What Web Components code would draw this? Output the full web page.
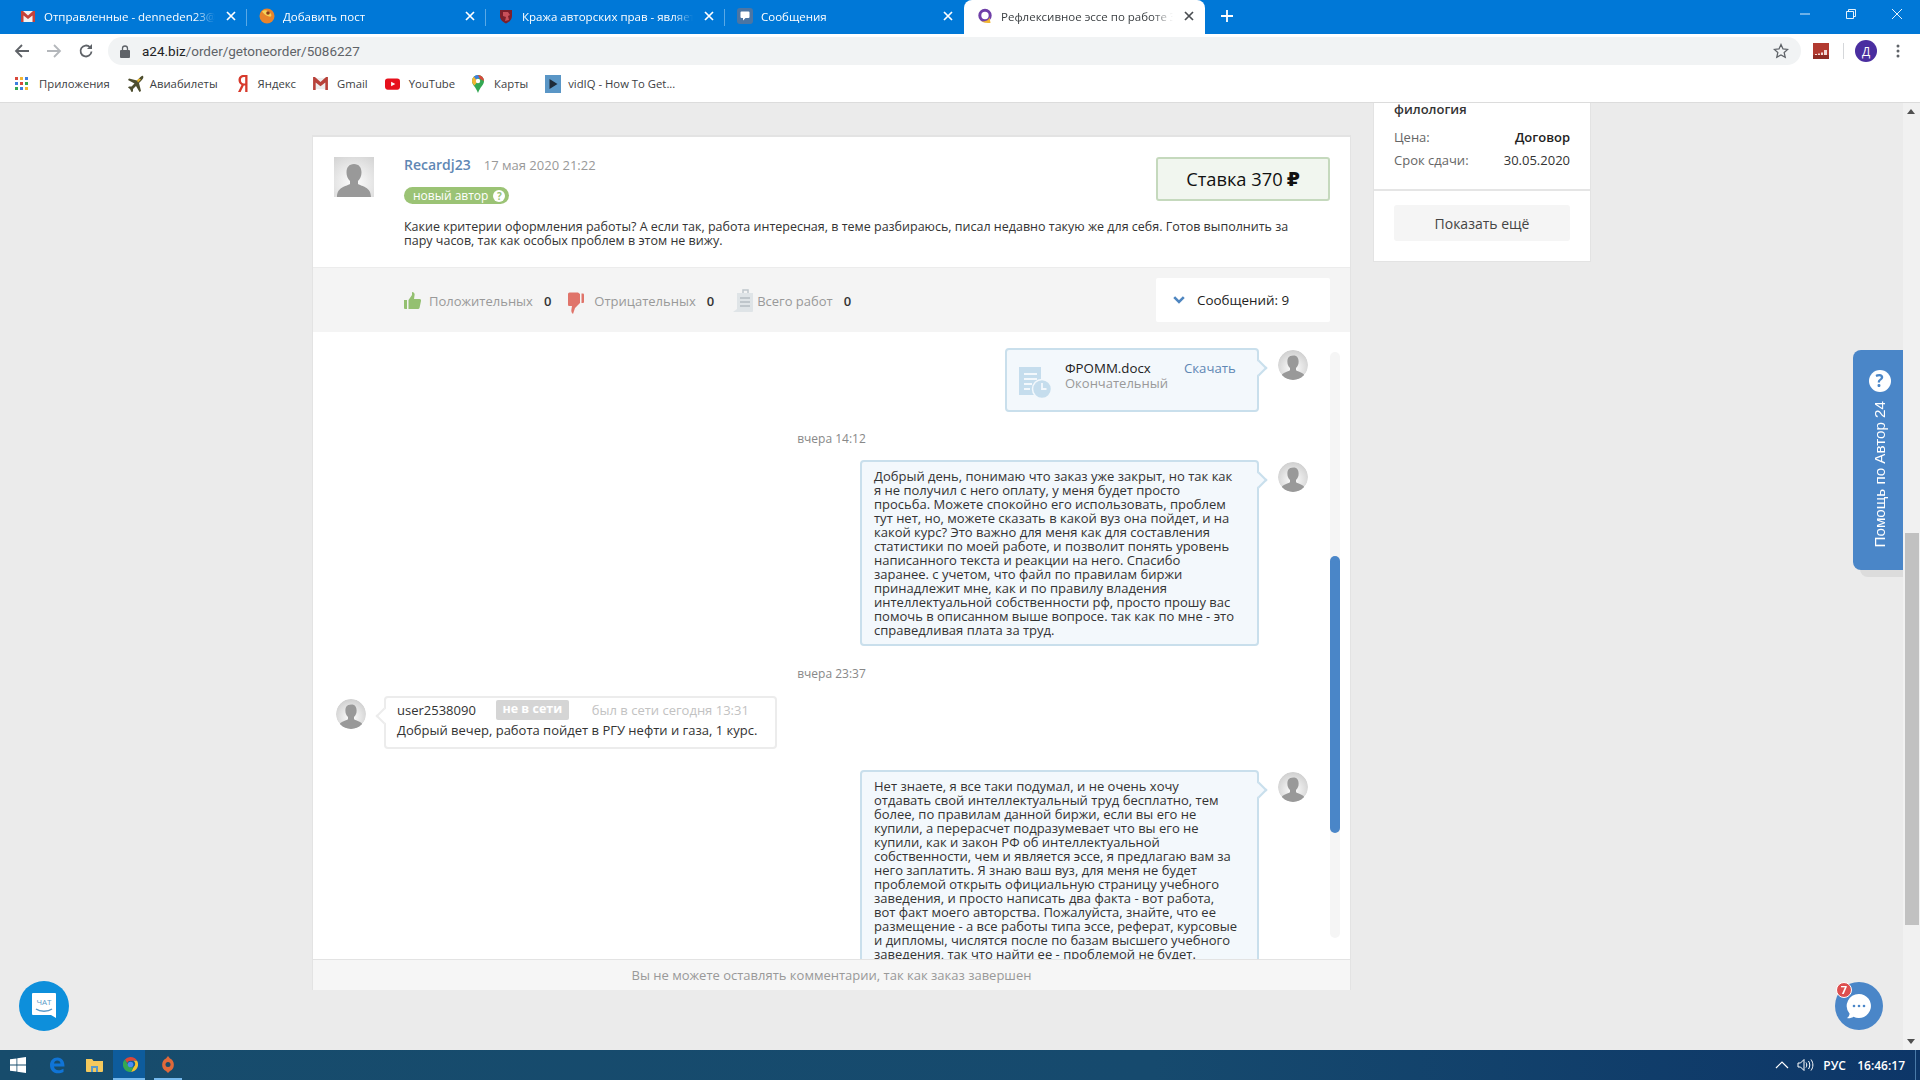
<!DOCTYPE html>
<html lang="ru">
<head>
<meta charset="utf-8">
<title>Рефлексивное эссе</title>
<style>
    html, body { margin: 0; height: 100%; }
    body {
        width: 1920px;
        height: 1080px;
        overflow: hidden;
        display: flex;
        flex-direction: column;
        font-family: "Open Sans", "Liberation Sans", sans-serif;
        background: #ebebeb;
    }
</style>
</head>
<body>

<tab-strip>
    <browser-tab close="light"><svg slot="icon" width="16" height="16" viewBox="0 0 16 16"><rect x="1" y="3" width="14" height="11" fill="#f2f2f2"/><path d="M1 14V3h2l5 4.500L13 3h2v11h-2.500V7.500L8 11 3.500 7.500V14z" fill="#c5423a"/></svg>Отправленные - denneden23@gmail.com</browser-tab>
    <browser-tab close="light"><svg slot="icon" width="16" height="16" viewBox="0 0 16 16"><circle cx="8" cy="8" r="7.500" fill="#e8842c"/><path d="M3 3.500C6 1 10 3 12 6c1 2 0 3-2 2.500C7 8 5 6 3 3.500z" fill="#f6d25a"/><circle cx="9" cy="5" r="1.800" fill="#8a3a1a"/></svg>Добавить пост</browser-tab>
    <browser-tab close="light"><svg slot="icon" width="16" height="16" viewBox="0 0 16 16"><path d="M2 2h12v6c0 4-3 6-6 7.500C5 14 2 12 2 8z" fill="#7d1f2a"/><path d="M5 4h5l2 3-2 1 1 4-4 1 1-4-3-1z" fill="#c9505a"/></svg>Кража авторских прав - является преступлением</browser-tab>
    <browser-tab close="light"><svg slot="icon" width="16" height="16" viewBox="0 0 16 16"><rect width="16" height="16" rx="3" fill="#4c75a3"/><path d="M4.500 3.500h7a1 1 0 0 1 1 1V9a1 1 0 0 1-1 1H8.500L6 12.500V10H4.500a1 1 0 0 1-1-1V4.500a1 1 0 0 1 1-1z" fill="#fff"/></svg>Сообщения</browser-tab>
    <browser-tab active close="dark"><svg slot="icon" width="16" height="16" viewBox="0 0 16 16"><circle cx="8" cy="7.500" r="5.200" fill="none" stroke="#6f3fa8" stroke-width="3"/><path d="M4 13.500c3 1.500 6 1.500 9.500 1.500l-1-6c-.5 3-3 4.500-8.500 4.500z" fill="#f2b632"/></svg>Рефлексивное эссе по работе Эрика Фромма</browser-tab>
    <tab-new></tab-new>
    <window-buttons></window-buttons>
</tab-strip>

<browser-toolbar></browser-toolbar>
<bookmarks-bar>
    <book-mark gap="10"><svg slot="icon" width="14" height="14" viewBox="0 0 14 14"><g><rect width="3" height="3" fill="#d9483b"/><rect x="5" width="3" height="3" fill="#f2b632"/><rect x="10" width="3" height="3" fill="#3c7ee0"/><rect y="5" width="3" height="3" fill="#3c7ee0"/><rect x="5" y="5" width="3" height="3" fill="#d9483b"/><rect x="10" y="5" width="3" height="3" fill="#34a853"/><rect y="10" width="3" height="3" fill="#34a853"/><rect x="5" y="10" width="3" height="3" fill="#3c7ee0"/><rect x="10" y="10" width="3" height="3" fill="#f2b632"/></g></svg>Приложения</book-mark>
    <book-mark gap="5"><svg slot="icon" width="18" height="18" viewBox="0 0 18 18"><path d="M16 1c1 1 0 3-2 5l-2 2 2 8-1.500 1L9 11l-3 3v2.500L4.500 17 3 14 1 12.500 2 11.500h2.500l3-3L1 5l1-1.500 8 2 2-2c2-2 3-3 4-2.500z" fill="#4d4d2e"/><path d="M10 5.500l2-2 2 1-3 3z" fill="#e8b62c"/></svg>Авиабилеты</book-mark>
    <book-mark gap="10" style="margin-left:2px"><svg slot="icon" width="11" height="19" viewBox="0 0 11 19"><path d="M10.500 1H7C3.500 1 1.500 3 1.500 6c0 2.400 1.100 3.800 3 4.900L1 18h2.600l3.200-6.600h1.400V18h2.300zM8.200 9.400H7c-2 0-3.100-1.300-3.100-3.400S5 3 7 3h1.200z" fill="#d7392b"/></svg>Яндекс</book-mark>
    <book-mark gap="9"><svg slot="icon" width="15" height="13" viewBox="0 0 16 14"><rect x="1" y="1" width="14" height="12" fill="#ededed"/><path d="M0 14V0h2l6 5.500L14 0h2v14h-2.800V5.800L8 10 2.800 5.800V14z" fill="#b8423a"/></svg>Gmail</book-mark>
    <book-mark gap="9"><svg slot="icon" width="15" height="12" viewBox="0 0 16 12"><rect width="16" height="12" rx="3" fill="#e6101c"/><path d="M6.500 3.500L11 6 6.500 8.500z" fill="#fff"/></svg>YouTube</book-mark>
    <book-mark gap="10"><svg slot="icon" width="12" height="18" viewBox="0 0 12 18"><path d="M6 0a6 6 0 0 1 6 6c0 4-4 6-6 12C4 12 0 10 0 6a6 6 0 0 1 6-6z" fill="#34a853"/><path d="M0 6a6 6 0 0 1 2-4.500L6 6 2.500 10.500C1 9 0 8 0 6z" fill="#f2b632"/><path d="M2 1.500A6 6 0 0 1 6 0l2 2.500-4 2z" fill="#3c7ee0"/><path d="M6 0a6 6 0 0 1 6 6L8 4z" fill="#d9483b"/><circle cx="6" cy="6" r="2.200" fill="#fff"/></svg>Карты</book-mark>
    <book-mark gap="7"><svg slot="icon" width="16" height="18" viewBox="0 0 16 18"><rect width="16" height="18" fill="#5a96c6"/><path d="M4.500 4l8 5-8 5z" fill="#1e2a38"/></svg>vidIQ - How To Get...</book-mark>
</bookmarks-bar>

<page-main>
    <order-card>
        <card-head></card-head>
        <card-stats></card-stats>
        <chat-list>
            <chat-row side="me" style="--top:16px">
                <file-bubble></file-bubble>
            </chat-row>
            <chat-date style="--above:20px;--below:14px">вчера 14:12</chat-date>
            <chat-row side="me">
                <chat-bubble side="me">Добрый день, понимаю что заказ уже закрыт, но так как<br>я не получил с него оплату, у меня будет просто<br>просьба. Можете спокойно его использовать, проблем<br>тут нет, но, можете сказать в какой вуз она пойдет, и на<br>какой курс? Это важно для меня как для составления<br>статистики по моей работе, и позволит понять уровень<br>написанного текста и реакции на него. Спасибо<br>заранее. с учетом, что файл по правилам биржи<br>принадлежит мне, как и по правилу владения<br>интеллектуальной собственности рф, просто прошу вас<br>помочь в описанном выше вопросе. так как по мне - это<br>справедливая плата за труд.</chat-bubble>
            </chat-row>
            <chat-date style="--above:21px;--below:15px">вчера 23:37</chat-date>
            <chat-row side="other">
                <incoming-bubble></incoming-bubble>
            </chat-row>
            <chat-row side="me" style="--top:21px">
                <chat-bubble side="me">Нет знаете, я все таки подумал, и не очень хочу<br>отдавать свой интеллектуальный труд бесплатно, тем<br>более, по правилам данной биржи, если вы его не<br>купили, а перерасчет подразумевает что вы его не<br>купили, как и закон РФ об интеллектуальной<br>собственности, чем и является эссе, я предлагаю вам за<br>него заплатить. Я знаю ваш вуз, для меня не будет<br>проблемой открыть официальную страницу учебного<br>заведения, и просто написать два факта - вот работа,<br>вот факт моего авторства. Пожалуйста, знайте, что ее<br>размещение - а все работы типа эссе, реферат, курсовые<br>и дипломы, числятся после по базам высшего учебного<br>заведения, так что найти ее - проблемой не будет.</chat-bubble>
            </chat-row>
        </chat-list>
        <card-foot>Вы не можете оставлять комментарии, так как заказ завершен</card-foot>
    </order-card>
    <order-side></order-side>
    <page-scrollbar></page-scrollbar>
</page-main>

<win-taskbar></win-taskbar>
<help-tab>Помощь по Автор 24</help-tab>
<chat-left></chat-left>
<chat-right></chat-right>

<script>
// silhouette used by all the grey avatars
const PERSON = `<path d="M20 7c-5 0-7.500 3.500-7.500 8.500 0 3.500 1.300 6.500 3.500 8.500v3C12 29.500 3 30 3 40h34c0-10-9-10.500-13-13v-3c2.200-2 3.500-5 3.500-8.500C27.500 10.500 25 7 20 7z" fill="#999"/>`;

class BaseEl extends HTMLElement {
    constructor() {
        super();
        this.attachShadow({ mode: "open" });
    }
    getStyles() { return ""; }
    getMarkup() { return "<slot></slot>"; }
    connectedCallback() {
        const template = document.createElement("template");
        template.innerHTML = `<style>${this.getStyles()}</style>${this.getMarkup()}`;
        this.shadowRoot.appendChild(template.content.cloneNode(true));
    }
}

class TabStrip extends BaseEl {
    getStyles() {
        return `:host { display: flex; flex: none; height: 34px; background: #0078d7; padding-left: 8px; box-sizing: border-box; position: relative; }`;
    }
}

class BrowserTab extends BaseEl {
    getStyles() {
        return `
            :host { display: flex; flex: none; align-items: center; width: 239px; height: 34px; box-sizing: border-box; padding: 0 0 2px 12px; color: #fff; font: 11.500px "Open Sans", sans-serif; position: relative; }
            :host(:not(:nth-of-type(4)):not([active]))::after { content: ""; position: absolute; right: 0; top: 9px; height: 17px; width: 1px; background: #5aa9e6; }
            :host([active]) { background: #fff; color: #3c4043; border-radius: 8px 8px 0 0; width: 241px; padding-left: 13px; }
            .icon { flex: none; width: 16px; height: 16px; margin-right: 8px; display: flex; align-items: center; }
            .title { flex: 1; white-space: nowrap; overflow: hidden; -webkit-mask-image: linear-gradient(to right, #000 88%, transparent); mask-image: linear-gradient(to right, #000 88%, transparent); }
            .x { flex: none; width: 32px; display: flex; justify-content: center; }
        `;
    }
    getMarkup() {
        const color = this.getAttribute("close") === "dark" ? "#4a4d51" : "#fff";
        return `<span class="icon"><slot name="icon"></slot></span><span class="title"><slot></slot></span>
            <span class="x"><svg width="10" height="10" viewBox="0 0 10 10"><path d="M1 1l8 8M9 1l-8 8" stroke="${color}" stroke-width="1.700"/></svg></span>`;
    }
}

class TabNew extends BaseEl {
    getStyles() { return `:host { display: flex; align-items: center; margin-left: 15px; padding-bottom: 2px; }`; }
    getMarkup() { return `<svg width="14" height="14" viewBox="0 0 14 14"><path d="M7 1v12M1 7h12" stroke="#fff" stroke-width="1.800"/></svg>`; }
}

class WindowButtons extends BaseEl {
    getStyles() {
        return `:host { display: flex; align-items: center; gap: 34px; margin-left: auto; padding: 0 17px 6px 0; }
                svg { display: block; }`;
    }
    getMarkup() {
        return `<svg width="12" height="12" viewBox="0 0 12 12"><path d="M1 6h10" stroke="#fff" stroke-opacity=".85"/></svg>
            <svg width="12" height="12" viewBox="0 0 12 12"><path d="M1.500 3.500h7v7h-7zM3.500 3.500v-2h7v7h-2" fill="none" stroke="#fff" stroke-opacity=".9"/></svg>
            <svg width="12" height="12" viewBox="0 0 12 12"><path d="M1 1l10 10M11 1L1 11" stroke="#fff" stroke-opacity=".9"/></svg>`;
    }
}

class BrowserToolbar extends BaseEl {
    getStyles() {
        return `
            :host { display: flex; flex: none; align-items: center; height: 36px; background: #fff; box-sizing: border-box; padding: 3px 0 5px 14px; }
            .nav { display: flex; gap: 16px; }
            svg { display: block; }
            .omni { flex: none; width: 1693px; height: 28px; margin-left: 14px; border-radius: 14px; background: #f1f3f4; display: flex; align-items: center; box-sizing: border-box; padding: 0 12px 0 12px; font: 13.500px Roboto, sans-serif; color: #5f6368; }
            .omni b { font-weight: 400; color: #202124; }
            .url { margin-left: 12px; flex: 1; }
            .ext { margin-left: 12px; }
            .sep { width: 1px; height: 16px; background: #d5d7da; margin: 0 11px 0 14px; }
            .me { width: 22px; height: 22px; border-radius: 50%; background: #4a2ea0; color: #fff; font: 12px "Open Sans", sans-serif; display: flex; align-items: center; justify-content: center; }
            .dots { margin-left: 19px; }
        `;
    }
    getMarkup() {
        return `<div class="nav">
                <svg width="16" height="16" viewBox="0 0 16 16"><path d="M15 8H2M8 2L2 8l6 6" fill="none" stroke="#5f6368" stroke-width="1.800"/></svg>
                <svg width="16" height="16" viewBox="0 0 16 16"><path d="M1 8h13M8 2l6 6-6 6" fill="none" stroke="#b4b7bb" stroke-width="1.800"/></svg>
                <svg width="16" height="16" viewBox="0 0 16 16"><path d="M13.500 8.500a5.500 5.500 0 1 1-1.600-4.400" fill="none" stroke="#5f6368" stroke-width="1.800"/><path d="M14 1v5H9z" fill="#5f6368"/></svg>
            </div>
            <div class="omni">
                <svg width="10" height="13" viewBox="0 0 10 13"><path d="M2.500 5V3.500a2.500 2.500 0 0 1 5 0V5" fill="none" stroke="#5f6368" stroke-width="1.300"/><rect y="5" width="10" height="8" rx="1" fill="#5f6368"/></svg>
                <span class="url"><b>a24.biz</b>/order/getoneorder/5086227</span>
                <svg width="16" height="16" viewBox="0 0 16 16"><path d="M8 1.500l2 4.400 4.700.5-3.500 3.200 1 4.700L8 11.900l-4.200 2.400 1-4.700L1.300 6.400 6 5.900z" fill="none" stroke="#5f6368" stroke-width="1.300"/></svg>
            </div>
            <svg class="ext" width="16" height="16" viewBox="0 0 16 16"><rect width="16" height="16" fill="#b23a30"/><path d="M2 11h2v1H2zM5 10.500h2V12H5zM8 9.500h2V12H8zM11 7h3v5h-3z" fill="#f3d9d5"/><rect y="12" width="16" height="4" fill="#8e2c24"/></svg>
            <div class="sep"></div>
            <div class="me">Д</div>
            <svg class="dots" width="4" height="14" viewBox="0 0 4 14"><circle cx="2" cy="2" r="1.500" fill="#5f6368"/><circle cx="2" cy="7" r="1.500" fill="#5f6368"/><circle cx="2" cy="12" r="1.500" fill="#5f6368"/></svg>`;
    }
}

class BookmarksBar extends BaseEl {
    getStyles() {
        return `:host { display: flex; flex: none; align-items: center; height: 33px; box-sizing: border-box; background: #fff; border-bottom: 1px solid #dcdcdc; padding: 0 0 5px 15px; gap: 17px; }`;
    }
}

class BookMark extends BaseEl {
    getStyles() {
        return `:host { display: flex; align-items: center; font: 11.300px "Open Sans", sans-serif; color: #3c4043; white-space: nowrap; }
                .icon { display: flex; align-items: center; margin-right: ${this.getAttribute("gap") || 9}px; }`;
    }
    getMarkup() { return `<span class="icon"><slot name="icon"></slot></span><slot></slot>`; }
}

class PageMain extends BaseEl {
    getStyles() {
        return `:host { display: flex; flex: 1; min-height: 0; align-items: flex-start; padding-left: 313px; position: relative; overflow: hidden; }`;
    }
}

class OrderCard extends BaseEl {
    getStyles() {
        return `:host { display: flex; flex-direction: column; flex: none; width: 1037px; height: 853px; margin-top: 34px; background: #fff; box-shadow: 0 -1px 0 1px #e3e3e3; }`;
    }
}

class CardHead extends BaseEl {
    getStyles() {
        return `
            :host { display: block; flex: none; height: 130px; box-sizing: border-box; padding: 19px 20px 0 21px; position: relative; font-size: 13px; }
            .ava { float: left; width: 40px; height: 40px; margin-top: 1px; }
            .body { margin-left: 70px; }
            .top { display: flex; justify-content: space-between; align-items: flex-start; }
            .who { display: flex; align-items: baseline; gap: 13px; line-height: 16px; margin-top: 1px; }
            .name { font-size: 14px; font-weight: 600; color: #5f87b4; }
            .date { color: #999; }
            .badge { display: inline-flex; align-items: center; gap: 5px; height: 17px; margin-top: 14px; padding: 0 4px 0 9px; border-radius: 9px; background: #9bc375; color: #fff; font-size: 12px; line-height: 17px; }
            .q { width: 12px; height: 12px; border-radius: 50%; background: #fff; color: #9bc375; font: 700 10px/12px "Open Sans", sans-serif; text-align: center; }
            .bid { width: 174px; height: 44px; margin-top: 1px; box-sizing: border-box; border: 2px solid #c5d9bd; border-radius: 3px; background: #f1f6ef; color: #111; font-size: 18.300px; display: flex; align-items: center; justify-content: center; padding-bottom: 1px; }
            .bid b { font-family: "DejaVu Sans", sans-serif; font-weight: 700; font-size: 19px; margin-left: 4px; }
            p { margin: 16px 0 0; font-size: 12.500px; line-height: 14px; color: #333; width: 905px; }
        `;
    }
    getMarkup() {
        return `<svg class="ava" viewBox="0 0 40 40"><defs><radialGradient id="g" cx=".5" cy=".65" r=".8"><stop offset="0" stop-color="#fff"/><stop offset="1" stop-color="#d4d4d4"/></radialGradient></defs><rect width="40" height="40" fill="url(#g)"/>${PERSON}</svg>
            <div class="body">
                <div class="top">
                    <div>
                        <div class="who"><span class="name">Recardj23</span><span class="date">17 мая 2020 21:22</span></div>
                        <span class="badge">новый автор <span class="q">?</span></span>
                    </div>
                    <div class="bid">Ставка 370<b>₽</b></div>
                </div>
                <p>Какие критерии оформления работы? А если так, работа интересная, в теме разбираюсь, писал недавно такую же для себя. Готов выполнить за пару часов, так как особых проблем в этом не вижу.</p>
            </div>`;
    }
}

class CardStats extends BaseEl {
    getStyles() {
        return `
            :host { display: flex; flex: none; align-items: center; height: 65px; box-sizing: border-box; background: #f4f4f4; border-top: 1px solid #ececec; padding: 1px 20px 0 91px; font-size: 13px; color: #999; }
            .s { display: flex; align-items: center; }
            .s b { font-weight: 600; color: #333; margin: 0 17px 0 11px; }
            svg { display: block; margin-right: 8px; }
            .count { margin-left: auto; margin-top: -1px; width: 174px; height: 44px; box-sizing: border-box; background: #fff; border-radius: 2px; display: flex; align-items: center; padding-left: 17px; color: #222; font-size: 13.400px; }
            .count svg { margin-right: 12px; }
        `;
    }
    getMarkup() {
        return `<div class="s"><svg width="17" height="18" viewBox="0 0 17 18"><path d="M0 8h3v9H1a1 1 0 0 1-1-1zM4.500 8L8 3V0c2 0 3 1.500 2.500 3.500L10 7h5.500a1.500 1.500 0 0 1 1.500 2l-1.500 7a1.500 1.500 0 0 1-1.500 1H4.500z" fill="#94c071"/></svg>Положительных<b>0</b></div>
            <div class="s"><svg width="16" height="22" viewBox="0 0 16 22" style="margin-right:10px;margin-top:5px"><path d="M0 2a1.500 1.500 0 0 1 1.500-1.500H10L12 2v9L7 16l-2 6c-1.500-1-2-3-1.500-5l.5-3H1.500A1.500 1.500 0 0 1 0 12z" fill="#e0746a"/><path d="M13.500 1.500H15a1 1 0 0 1 1 1V10a1 1 0 0 1-1 1h-1.500z" fill="#e0746a"/></svg>Отрицательных<b style="margin-right:19px">0</b></div>
            <div class="s"><svg width="20" height="24" viewBox="0 0 20 24" style="margin-right:4px"><path d="M4 4h16v18a1 1 0 0 1-1 1H0l4-3z" fill="#dfe4e7"/><path d="M7 9h10M7 13h10M7 17h10" stroke="#bfc6cb" stroke-width="2"/><path d="M10 4V1h5v3" fill="none" stroke="#bfc6cb" stroke-width="1.500"/></svg>Всего работ<b>0</b></div>
            <div class="count"><svg width="12" height="8" viewBox="0 0 12 8"><path d="M1.200 1.200L6 6l4.800-4.800" fill="none" stroke="#4f86c0" stroke-width="2.600"/></svg>Сообщений: 9</div>`;
    }
}

class ChatList extends BaseEl {
    getStyles() {
        return `:host { display: block; flex: 1; min-height: 0; position: relative; overflow: hidden; }
                .track { position: absolute; left: 1017px; top: 20px; bottom: 21px; width: 10px; border-radius: 5px; background: #f5f5f5; }
                .thumb { position: absolute; left: 0; right: 0; top: 204px; height: 277px; border-radius: 5px; background: #4a86c8; }`;
    }
    getMarkup() { return `<slot></slot><div class="track"><div class="thumb"></div></div>`; }
}

class ChatRow extends BaseEl {
    getStyles() {
        return `
            :host { display: flex; align-items: flex-start; gap: 19px; margin-top: var(--top, 0); }
            :host([side=me]) { justify-content: flex-end; padding-right: 42px; }
            :host([side=other]) { padding-left: 23px; gap: 18px; }
            .ava { flex: none; width: 30px; height: 30px; margin-top: 2px; border-radius: 50%; }
            :host([side=other]) .ava { margin-top: 3px; }
        `;
    }
    getMarkup() {
        const ava = `<svg class="ava" viewBox="0 0 40 40"><defs><radialGradient id="a" cx=".5" cy=".6" r=".6"><stop offset="0" stop-color="#fff"/><stop offset="1" stop-color="#cfcfcf"/></radialGradient></defs><circle cx="20" cy="20" r="20" fill="url(#a)"/><g clip-path="circle(20px at 20px 20px)">${PERSON}</g></svg>`;
        return this.getAttribute("side") === "me" ? `<slot></slot>${ava}` : `${ava}<slot></slot>`;
    }
}

class ChatBubble extends BaseEl {
    getStyles() {
        return `
            :host { display: block; position: relative; box-sizing: border-box; width: 399px; padding: 7px 12px 7px; background: #f3f8fc; border: 2px solid #c9dfec; border-radius: 4px; font-size: 13px; line-height: 14px; color: #333; white-space: nowrap; }
            :host::after { content: ""; position: absolute; right: -8px; top: 12px; width: 12px; height: 12px; background: #f3f8fc; border: 2px solid #c9dfec; border-left: 0; border-bottom: 0; box-sizing: border-box; transform: rotate(45deg); }
        `;
    }
}

class FileBubble extends ChatBubble {
    getStyles() {
        return super.getStyles() + `
            :host { width: 254px; height: 64px; padding: 0; display: flex; }
            .ic { margin: 17px 14px 0 12px; flex: none; }
            .meta { padding-top: 11px; flex: none; width: 98px; }
            .name { color: #222; font-size: 13.300px; }
            .kind { color: #999; line-height: 14px; margin-top: 1px; }
            a { color: #5f87b4; margin-top: 11px; margin-left: 21px; font-size: 13.200px; }
        `;
    }
    getMarkup() {
        return `<svg class="ic" width="32" height="32" viewBox="0 0 32 32"><rect width="22" height="28" fill="#c5dded"/><path d="M5 7h13M5 12h13M5 17h8M5 22h6" stroke="#f3f8fc" stroke-width="2"/><circle cx="23" cy="22" r="9.500" fill="#c5dded" stroke="#f3f8fc" stroke-width="1.500"/><path d="M23 16v6h4.500" fill="none" stroke="#f3f8fc" stroke-width="1.800"/></svg>
            <div class="meta"><div class="name">ФРОММ.docx</div><div class="kind">Окончательный</div></div>
            <a>Скачать</a>`;
    }
}

class IncomingBubble extends BaseEl {
    getStyles() {
        return `
            :host { display: block; position: relative; box-sizing: border-box; width: 393px; height: 53px; padding: 2px 0 0 11px; background: #fff; border: 2px solid #ececec; border-radius: 4px; font-size: 13px; color: #333; white-space: nowrap; }
            :host::before { content: ""; position: absolute; left: -8px; top: 12px; width: 12px; height: 12px; background: #fff; border: 2px solid #ececec; border-right: 0; border-top: 0; box-sizing: border-box; transform: rotate(45deg); }
            .top { display: flex; align-items: center; height: 20px; }
            .off { margin-left: 20px; width: 73px; height: 20px; border-radius: 2px; background: #d5d5d5; color: #fff; font-size: 12.500px; font-weight: 700; text-align: center; line-height: 18px; }
            .seen { margin-left: 23px; color: #c2c2c2; }
            .text { line-height: 14px; margin-top: 3px; color: #333; }
        `;
    }
    getMarkup() {
        return `<div class="top"><span>user2538090</span><span class="off">не в сети</span><span class="seen">был в сети сегодня 13:31</span></div>
            <div class="text">Добрый вечер, работа пойдет в РГУ нефти и газа, 1 курс.</div>`;
    }
}

class ChatDate extends BaseEl {
    getStyles() {
        return `:host { display: block; text-align: center; font-size: 12px; line-height: 14px; color: #888; margin: var(--above, 19px) 0 var(--below, 15px); }`;
    }
}

class CardFoot extends BaseEl {
    getStyles() {
        return `:host { display: block; flex: none; height: 31px; box-sizing: border-box; background: #f6f6f6; border-top: 1px solid #e3e3e3; text-align: center; font-size: 13px; line-height: 30px; color: #999; }`;
    }
}

class OrderSide extends BaseEl {
    getStyles() {
        return `
            :host { display: block; flex: none; width: 216px; height: 158px; box-sizing: border-box; margin-left: 24px; background: #fff; box-shadow: 0 0 0 1px #e3e3e3; font-size: 13px; color: #333; }
            .top { padding: 0 20px; height: 88px; box-sizing: border-box; border-bottom: 2px solid #e5e5e5; }
            .sub { font-weight: 600; line-height: 13px; }
            .row { display: flex; justify-content: space-between; line-height: 23px; color: #666; }
            .row b { font-weight: 600; color: #222; }
            .row span:last-child { color: #333; }
            .wrap { padding: 14px 20px 0; }
            .more { height: 36px; border-radius: 3px; background: #f5f5f5; text-align: center; line-height: 37px; font-size: 14px; color: #444; }
        `;
    }
    getMarkup() {
        return `<div class="top"><div class="sub">филология</div>
                <div class="row" style="margin-top:10px"><span>Цена:</span><b>Договор</b></div>
                <div class="row"><span>Срок сдачи:</span><span>30.05.2020</span></div></div>
            <div class="wrap"><div class="more">Показать ещё</div></div>`;
    }
}

class PageScrollbar extends BaseEl {
    getStyles() {
        return `
            :host { position: absolute; right: 0; top: 0; bottom: 0; width: 17px; background: #f1f1f1; }
            .up, .down { position: absolute; left: 4px; width: 0; height: 0; border-left: 4px solid transparent; border-right: 4px solid transparent; }
            .up { top: 6px; border-bottom: 5px solid #505050; }
            .down { bottom: 6px; border-top: 5px solid #505050; }
            .thumb { position: absolute; left: 2px; right: 1px; top: 430px; height: 392px; background: #c1c1c1; }
        `;
    }
    getMarkup() { return `<div class="up"></div><div class="thumb"></div><div class="down"></div>`; }
}

class WinTaskbar extends BaseEl {
    getStyles() {
        return `
            :host { display: flex; flex: none; align-items: center; height: 30px; background: linear-gradient(to right, #174c6c, #164a6e 60%, #0d3668); color: #fff; position: relative; z-index: 3; }
            .i { flex: none; display: flex; align-items: center; justify-content: center; height: 30px; box-sizing: border-box; }
            .chrome { background: #0e5c9c; border-bottom: 2px solid #76b9ed; }
            .origin { border-bottom: 2px solid #76b9ed; }
            .tray { margin-left: auto; display: flex; align-items: center; font: 12px "Open Sans", sans-serif; padding-right: 4px; }
            .show { width: 1px; height: 30px; margin-left: 10px; background: #4a7aa8; }
        `;
    }
    getMarkup() {
        return `<div class="i" style="width:36px"><svg width="16" height="16" viewBox="0 0 16 16"><path d="M0 2.300L6.500 1.400v6.200H0zM7.300 1.300L16 0v7.600H7.300zM0 8.400h6.500v6.200L0 13.700zM7.300 8.400H16V16l-8.700-1.300z" fill="#fff"/></svg></div>
            <div class="i" style="width:41px"><svg width="16" height="17" viewBox="0 0 16 17"><path d="M1 8c0-4 3-7.500 7.500-7.500S15.500 4 15.500 9.500H5c.3 2.500 2.200 3.700 4.500 3.700 2 0 3.500-.6 5-1.500v3.300c-1.500.8-3.400 1.300-5.500 1.300C4 16.300 1 13 1 8zm4-1.500h6.500C11.300 4.800 10.200 3.500 8.300 3.500 6.500 3.500 5.300 4.800 5 6.500z" fill="#1074d6"/></svg></div>
            <div class="i" style="width:34px;margin-right:2px"><svg width="17" height="14" viewBox="0 0 17 14"><path d="M0 1h6l1.500 2H17v10a1 1 0 0 1-1 1H1a1 1 0 0 1-1-1z" fill="#f4c95d"/><rect x="5" y="8" width="7" height="6" fill="#5a9ac8"/><rect x="7" y="10" width="3" height="4" fill="#f4c95d"/></svg></div>
            <div class="i chrome" style="width:32px;padding-left:2px"><svg width="15" height="15" viewBox="0 0 16 16"><path d="M8 0a8 8 0 0 1 7 4H8a4 4 0 0 0-3.600 2.300L2 2.600A8 8 0 0 1 8 0z" fill="#d9483b"/><path d="M15 4a8 8 0 0 1-6.500 12l3-5.500a4 4 0 0 0-.3-6.500z" fill="#f2c230"/><path d="M8.500 16A8 8 0 0 1 2 2.600l3.200 5.500a4 4 0 0 0 6 2.400z" fill="#34a853"/><circle cx="8" cy="8" r="3" fill="#4a8af4"/></svg></div>
            <div class="i origin" style="width:28px;margin-left:9px"><svg width="14" height="17" viewBox="0 0 14 17"><path d="M7 0l2 2.500a7 7 0 0 1 0 12.500L7 17l-2-2A7 7 0 0 1 5 2.500z" fill="#e0693a"/><circle cx="7" cy="8.500" r="2.500" fill="#174c6c"/></svg></div>
            <div class="tray">
                <svg width="14" height="8" viewBox="0 0 14 8" style="margin-right:8px"><path d="M1 7l6-6 6 6" fill="none" stroke="#fff" stroke-width="1.200"/></svg>
                <svg width="17" height="14" viewBox="0 0 17 14" style="margin-right:9px"><path d="M1 5h2.500L7 1.500v11L3.500 9H1z" fill="none" stroke="#fff"/><path d="M9 4.500c1 1.500 1 3.500 0 5M11.500 3c1.700 2.500 1.700 5.500 0 8M14 1.500c2.500 3.500 2.500 7.500 0 11" fill="none" stroke="#fff"/></svg>
                <span style="width:34px;font-weight:600">РУС</span>
                <span style="font-weight:600">16:46:17</span>
                <span class="show"></span>
            </div>`;
    }
}

class HelpTab extends BaseEl {
    getStyles() {
        return `
            :host { position: fixed; left: 1853px; top: 350px; width: 50px; height: 220px; box-sizing: border-box; background: #4a86c8; border-radius: 8px 0 0 8px; box-shadow: 7px 7px 0 #dcdcdc; clip-path: inset(0 0 -8px 0); display: flex; flex-direction: column; align-items: center; padding: 20px 0 0 3px; color: #fff; font: 15.200px "Liberation Sans", sans-serif; }
            .q { flex: none; width: 22px; height: 22px; border-radius: 50%; background: #fff; color: #4a86c8; font: 700 17px/22px "Open Sans", sans-serif; text-align: center; }
            .t { margin-top: 9px; writing-mode: vertical-rl; transform: rotate(180deg); white-space: nowrap; }
        `;
    }
    getMarkup() { return `<div class="q">?</div><div class="t"><slot></slot></div>`; }
}

class ChatLeft extends BaseEl {
    getStyles() {
        return `:host { position: fixed; left: 19px; top: 981px; width: 50px; height: 50px; border-radius: 50%; background: #0d8fdb; display: flex; align-items: center; justify-content: center; z-index: 2; }`;
    }
    getMarkup() {
        return `<svg width="24" height="26" viewBox="0 0 24 26"><path d="M1 0h22a1 1 0 0 1 1 1v24l-5-3H1a1 1 0 0 1-1-1V1a1 1 0 0 1 1-1z" fill="#fff"/><text x="12" y="12" text-anchor="middle" font-family="Open Sans, sans-serif" font-size="8" fill="#5a9ac8">ЧАТ</text><path d="M4 16c4 3 12 3 16 0" fill="none" stroke="#5a9ac8" stroke-width="1.500"/></svg>`;
    }
}

class ChatRight extends BaseEl {
    getStyles() {
        return `
            :host { position: fixed; left: 1835px; top: 982px; width: 48px; height: 48px; border-radius: 50%; background: #4a86c8; display: flex; align-items: center; justify-content: center; z-index: 2; }
            .n { position: absolute; left: 1px; top: 0; width: 14px; height: 14px; box-sizing: content-box; border: 1px solid #fff; border-radius: 50%; background: #dd4f4f; color: #fff; font: 700 11px/14px "Open Sans", sans-serif; text-align: center; }
        `;
    }
    getMarkup() {
        return `<svg width="26" height="26" viewBox="0 0 26 26"><path d="M13 1a12 12 0 1 1-5.500 22.700C5.500 25 3 25.500 1 25c1.500-1 2.300-2.500 2.600-4.300A12 12 0 0 1 13 1z" fill="#fff"/><circle cx="8" cy="13" r="1.300" fill="#4a86c8"/><circle cx="13" cy="13" r="1.300" fill="#4a86c8"/><circle cx="18" cy="13" r="1.300" fill="#4a86c8"/></svg><div class="n">7</div>`;
    }
}

customElements.define("tab-strip", TabStrip);
customElements.define("browser-tab", BrowserTab);
customElements.define("tab-new", TabNew);
customElements.define("window-buttons", WindowButtons);
customElements.define("browser-toolbar", BrowserToolbar);
customElements.define("bookmarks-bar", BookmarksBar);
customElements.define("book-mark", BookMark);
customElements.define("page-main", PageMain);
customElements.define("order-card", OrderCard);
customElements.define("card-head", CardHead);
customElements.define("card-stats", CardStats);
customElements.define("chat-list", ChatList);
customElements.define("chat-row", ChatRow);
customElements.define("chat-bubble", ChatBubble);
customElements.define("file-bubble", FileBubble);
customElements.define("incoming-bubble", IncomingBubble);
customElements.define("chat-date", ChatDate);
customElements.define("card-foot", CardFoot);
customElements.define("order-side", OrderSide);
customElements.define("page-scrollbar", PageScrollbar);
customElements.define("win-taskbar", WinTaskbar);
customElements.define("help-tab", HelpTab);
customElements.define("chat-left", ChatLeft);
customElements.define("chat-right", ChatRight);
</script>
</body>
</html>
